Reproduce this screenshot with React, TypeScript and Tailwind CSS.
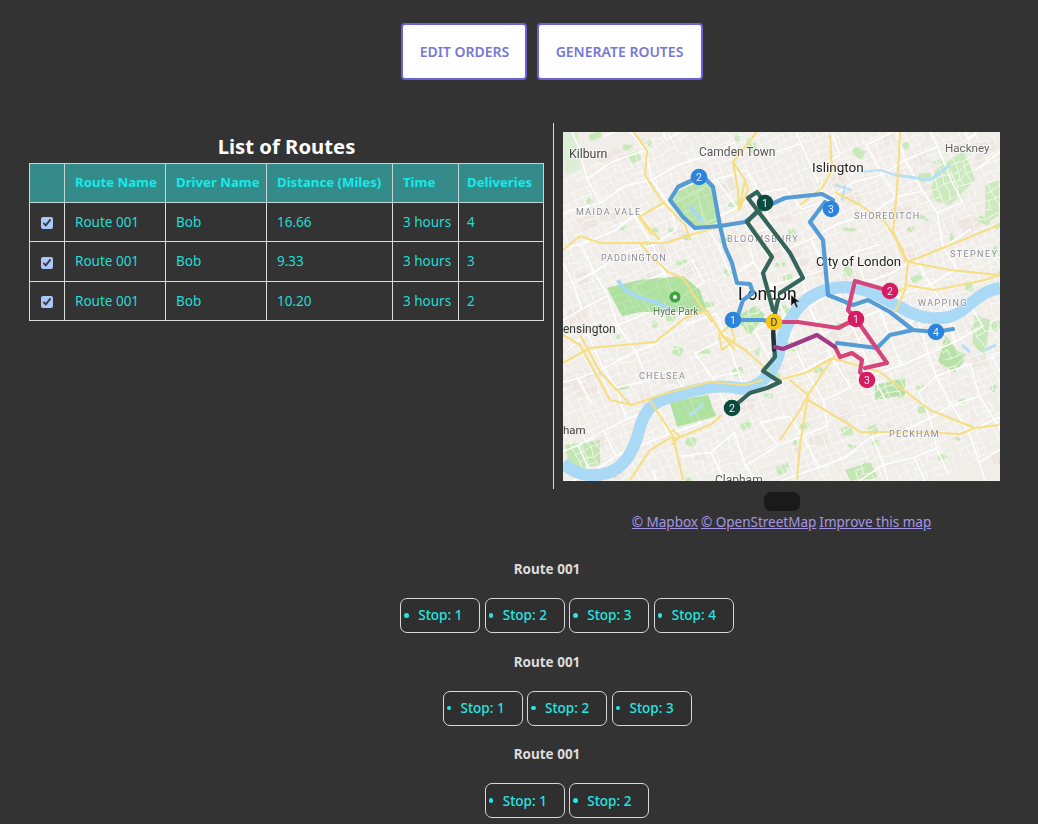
import React from "react";

const font = { fontFamily: '"Noto Sans", "Open Sans", sans-serif' };

function rng(seed: number) {
  let s = seed;
  return () => {
    s = (s * 1664525 + 1013904223) % 4294967296;
    return s / 4294967296;
  };
}

const X0 = 563, Y0 = 132, W = 437, H = 349;

function buildStreets(step: number, jitter: number, prob: number, seed: number) {
  const r = rng(seed);
  const cols = Math.ceil(W / step) + 2;
  const rows = Math.ceil(H / step) + 2;
  const pts: [number, number][][] = [];
  const angle = -0.42;
  for (let j = 0; j < rows + 8; j++) {
    const row: [number, number][] = [];
    for (let i = 0; i < cols + 8; i++) {
      const gx = (i - 4) * step - W / 2 + r() * jitter;
      const gy = (j - 4) * step - H / 2 + r() * jitter;
      row.push([
        X0 + W / 2 + gx * Math.cos(angle) - gy * Math.sin(angle),
        Y0 + H / 2 + gx * Math.sin(angle) + gy * Math.cos(angle),
      ]);
    }
    pts.push(row);
  }
  let d = "";
  const f = (n: number) => n.toFixed(1);
  for (let j = 0; j < pts.length; j++) {
    for (let i = 0; i < pts[j].length; i++) {
      const p = pts[j][i];
      if (i + 1 < pts[j].length && r() < prob) d += `M${f(p[0])} ${f(p[1])}L${f(pts[j][i + 1][0])} ${f(pts[j][i + 1][1])}`;
      if (j + 1 < pts.length && r() < prob) d += `M${f(p[0])} ${f(p[1])}L${f(pts[j + 1][i][0])} ${f(pts[j + 1][i][1])}`;
    }
  }
  return d;
}

function buildPatches(n: number, seed: number, a: number, b: number) {
  const r = rng(seed);
  const out: { x: number; y: number; w: number; h: number; a: number }[] = [];
  for (let i = 0; i < n; i++) {
    out.push({ x: X0 + r() * W, y: Y0 + r() * H, w: a + r() * b, h: a * 0.8 + r() * b * 0.7, a: r() * 60 - 30 });
  }
  return out;
}

const fine = buildStreets(8, 4, 0.8, 7);
const mid = buildStreets(30, 9, 0.62, 23);
const patches = buildPatches(90, 11, 4, 9);
const tints = buildPatches(70, 91, 7, 14);

const yellowRoads = [
  "M634 132L647 151L645 175L661 200L685 225L690 240",
  "M563 250L580 236L600 243L640 243L665 243L690 235L722 226",
  "M640 243L650 255L668 272L683 278L700 305L712 322",
  "M665 202L639 217L652 235",
  "M639 217L660 240",
  "M757 132L733 162L738 190L739 210M733 162L745 180L739 210L748 190L745 180",
  "M563 363L590 348L655 342L685 318L707 310",
  "M707 310L722 335L745 350L770 372",
  "M722 335L735 350M719 335L730 325L735 340L722 350Z",
  "M563 335L580 345L610 400L632 405L660 395L710 382L745 385L763 380",
  "M580 335L600 372L630 404",
  "M650 400L673 436L683 480",
  "M672 440L710 425L722 415",
  "M672 430L680 436L672 445",
  "M630 480L650 450L672 437",
  "M830 135L832 170L822 188L800 205",
  "M835 192L860 205L885 222L903 250L905 262",
  "M900 132L897 190L893 230L900 250L908 262L905 290L895 312",
  "M908 262L950 245L999 225",
  "M908 262L950 270L999 275",
  "M905 285L935 290L985 280L999 275",
  "M890 295L905 288",
  "M832 358L880 372L930 410L975 428L999 425",
  "M832 358L808 372L780 380",
  "M835 355L808 395L800 410L780 440",
  "M808 395L800 445L797 480",
  "M808 400L850 425L860 432L920 432L960 434L975 428",
  "M790 380L808 395",
];

function Marker({ x, y, c, t, tc = "#eef" }: { x: number; y: number; c: string; t: string; tc?: string }) {
  return (
    <g>
      <circle cx={x} cy={y} r="8.3" fill={c} />
      <text x={x} y={y + 3.7} textAnchor="middle" fontSize="10.5" fill={tc} fontFamily="Roboto, sans-serif">
        {t}
      </text>
    </g>
  );
}

function Label({ x, y, t, s = 11, c = "#444", sp = 0, w = 400 }: { x: number; y: number; t: string; s?: number; c?: string; sp?: number; w?: number }) {
  return (
    <text x={x} y={y} fontSize={s} fill={c} letterSpacing={sp} fontWeight={w} fontFamily="Roboto, sans-serif" stroke="#fff" strokeOpacity="0.55" strokeWidth="2" paintOrder="stroke">
      {t}
    </text>
  );
}

function MapDrawing() {
  return (
    <svg viewBox={`${X0} ${Y0} ${W} ${H}`} width={W} height={H} className="block">
      <defs>
        <filter id="soft" x="0" y="0" width="100%" height="100%">
          <feGaussianBlur stdDeviation="0.4" />
        </filter>
      </defs>
      <rect x={X0} y={Y0} width={W} height={H} fill="#f1eeea" />
      <g filter="url(#soft)">
        {tints.map((p, i) => (
          <rect key={i} x={p.x} y={p.y} width={p.w} height={p.h} fill="#eee6e1" transform={`rotate(${p.a} ${p.x} ${p.y})`} />
        ))}
        {patches.map((p, i) => (
          <rect key={i} x={p.x} y={p.y} width={p.w} height={p.h} rx="2" fill="#c8e9ba" transform={`rotate(${p.a} ${p.x} ${p.y})`} />
        ))}
        {/* parks */}
        <path d="M677 192L700 181L712 184L720 222L693 228L672 204Z" fill="#b8e2a8" />
        <path d="M607 288L640 280L683 276L700 290L707 312L640 312L622 316Z" fill="#aee0a0" />
        <path d="M670 402L708 395L716 416L677 427Z" fill="#aee0a0" />
        <path d="M735 318L755 305L765 315L750 335Z" fill="#bfe5ae" />
        <path d="M875 385L905 378L905 395L875 400Z" fill="#b8e2a8" />
        <path d="M945 335L965 360L955 372L938 362Z" fill="#b8e2a8" />
        <path d="M975 315L990 320L985 355L972 345Z" fill="#c6e7b7" />
        <path d="M935 170L965 150L975 180L950 205L930 200Z" fill="#cdeabf" />
        <path d="M985 185L999 180L999 215L985 225Z" fill="#cdeabf" />
        <path d="M565 445L600 440L600 465L570 470Z" fill="#c3e6b4" />
        <path d="M845 470L870 462L878 478L850 481Z" fill="#c3e6b4" />
        <path d="M563 132L578 132L580 170L565 175Z" fill="#dcefd6" />
        {/* streets */}
        <path d={fine} fill="none" stroke="#fdfcfb" strokeOpacity="0.85" strokeWidth="0.9" />
        <path d={mid} fill="none" stroke="#ffffff" strokeWidth="1.5" />
        <path d="M677 192L700 181L712 184L720 222L693 228L672 204Z" fill="#b8e2a8" fillOpacity="0.7" />
        <path d="M607 288L640 280L683 276L700 290L707 312L640 312L622 316Z" fill="#aee0a0" fillOpacity="0.75" />
        <path d="M670 402L708 395L716 416L677 427Z" fill="#aee0a0" fillOpacity="0.8" />
        {/* water */}
        <path d="M563 463C575 475 592 478 607 473C625 468 635 448 640 427C645 410 652 403 670 397C690 392 712 383 737 388C755 392 772 375 778 357C782 340 783 330 792 317C800 303 815 288 845 287C870 288 885 300 900 307C920 320 945 322 960 312C975 300 985 290 1000 288" fill="none" stroke="#aad9f6" strokeWidth="12" />
        <path d="M690 206C695 212 697 218 703 220M618 280C625 295 640 298 655 302M655 302L672 310" fill="none" stroke="#a7d8f2" strokeWidth="4" />
        <path d="M689 415C695 412 700 408 703 403M962 345L970 352M895 175L930 180L950 165M996 345L985 350" fill="none" stroke="#b6dff5" strokeWidth="3" />
        <path d="M835 185L852 190M845 185L842 200M860 172L880 170M880 170L895 175" fill="none" stroke="#b6dff5" strokeWidth="2" />
        {yellowRoads.map((d, i) => (
          <path key={i} d={d} fill="none" stroke="#f6de82" strokeWidth="2.1" strokeLinejoin="round" />
        ))}
      </g>
      {/* labels */}
      <Label x={569} y={158} t="Kilburn" s={12.3} c="#444" />
      <Label x={699} y={156} t="Camden Town" s={12} c="#555" />
      <Label x={812} y={172} t="Islington" s={13.5} c="#222" />
      <Label x={945} y={152} t="Hackney" s={11.6} c="#666" />
      <Label x={576} y={215} t="MAIDA VALE" s={9} c="#8a8a96" sp={1.4} />
      <Label x={727} y={242} t="BLOOMSBURY" s={9} c="#8a8a96" sp={1.4} />
      <Label x={854} y={219} t="SHOREDITCH" s={9} c="#8a8a96" sp={1.2} />
      <Label x={950} y={257} t="STEPNEY" s={9} c="#8a8a96" sp={1.4} />
      <Label x={601} y={261} t="PADDINGTON" s={9} c="#8a8a96" sp={1} />
      <Label x={816} y={266} t="City of London" s={13.2} c="#222" />
      <Label x={738} y={300} t="London" s={17.5} c="#111" />
      <Label x={918} y={306} t="WAPPING" s={9} c="#8a8a96" sp={1.4} />
      <Label x={653} y={315} t="Hyde Park" s={10} c="#5c7a55" />
      <text x={563} y={333} fontSize="12" fill="#333" fontFamily="Roboto, sans-serif">ensington</text>
      <Label x={639} y={379} t="CHELSEA" s={9} c="#8a8a96" sp={1.2} />
      <text x={563} y={434} fontSize="11.5" fill="#444" fontFamily="Roboto, sans-serif">ham</text>
      <Label x={889} y={437} t="PECKHAM" s={9} c="#8a8a96" sp={1.2} />
      <Label x={715} y={484} t="Clapham" s={12} c="#555" />
      <circle cx={675} cy={297} r="5.5" fill="#3ea33e" />
      <circle cx={675} cy={297} r="2" fill="#fff" />
      {/* routes */}
      <g fill="none" strokeLinejoin="round" strokeLinecap="round" strokeWidth="4.2">
        <g stroke="#559bd6">
          <path d="M699 177L678 187L670 200L683 217L695 228L720 226L713 187L703 176Z" />
          <path d="M720 226L725 247L732 263L737 283L750 284L753 293L743 300L738 315" />
          <path d="M720 226L745 222L765 207L785 198L822 194L833 200" />
          <path d="M825 202L810 222L823 240L828 295L853 305L868 300L890 312L913 330L936 332L953 329" />
          <path d="M913 330L890 335L877 348L837 343" />
          <path d="M733 320L763 320L771 322" />
        </g>
        <g stroke="#35645a">
          <path d="M765 203L757 192L748 198L790 253L803 278L780 293" />
          <path d="M765 203L747 222L772 257L763 273L773 310" />
          <path d="M778 300L773 322" />
          <path d="M773 333L775 357L763 371L780 382L767 388L750 393L732 408" />
        </g>
        <path d="M773 322L774 350" stroke="#22333a" />
        <g stroke="#d6457a">
          <path d="M890 291L855 281L848 310L856 319L838 328L798 322L775 322" />
          <path d="M856 319L887 363L865 368" />
          <path d="M835 347L840 357L852 353L862 360L860 372L867 380" />
        </g>
        <path d="M775 347L783 349L817 335L835 347" stroke="#a13a85" />
      </g>
      <Marker x={699} y={177} c="#2a84de" t="2" />
      <Marker x={733} y={320} c="#2a84de" t="1" />
      <Marker x={831} y={209} c="#2a84de" t="3" />
      <Marker x={936} y={332} c="#2a84de" t="4" />
      <Marker x={765} y={203} c="#0c4a3e" t="1" />
      <Marker x={732} y={408} c="#0c4a3e" t="2" />
      <Marker x={890} y={291} c="#d81b60" t="2" />
      <Marker x={856} y={319} c="#d81b60" t="1" />
      <Marker x={867} y={380} c="#d81b60" t="3" />
      <Marker x={774} y={322} c="#f5c518" t="D" tc="#333" />
      <path d="M791 295L791 306L794 303L796.5 308L798 307L796 302L800 302Z" fill="#111" stroke="#ddd" strokeWidth="0.5" />
    </svg>
  );
}

const rows = [
  { d: "16.66", n: 4 },
  { d: "9.33", n: 3 },
  { d: "10.20", n: 2 },
];

const th = "border border-[#c4d6d6] pl-[10px] pr-[8px] text-left font-bold text-[13.2px] whitespace-nowrap text-[#14eaea]";
const td = "border border-[#dcdcdc] pl-[10px] pr-[8px] text-[13.5px] whitespace-nowrap text-[#1fdcd6]";

function Stops({ n }: { n: number }) {
  return (
    <div className="flex flex-col items-center">
      <div className="text-[13.5px] font-bold text-[#dcdcdc] leading-[20px]">Route 001</div>
      <div className="pl-10 mt-[19px] flex gap-[4.5px]">
        {Array.from({ length: n }, (_, i) => (
          <div key={i} className="relative w-[80px] h-[35px] border border-[#d8d8d8] rounded-[7px] bg-[#2f2f2f] flex items-center pl-[17px] text-[13.5px] font-medium text-[#22e8e4]">
            <span className="absolute left-[3px] top-[14px] w-[4.5px] h-[4.5px] rounded-full bg-[#22e8e4]" />
            Stop: {i + 1}
          </div>
        ))}
      </div>
    </div>
  );
}

export default function App() {
  return (
    <div className="w-[1038px] h-[824px] overflow-hidden bg-[#333333]" style={font}>
      <div className="flex justify-center gap-[10px] pt-[23px] pl-[65px]">
        <button className="w-[126px] h-[57px] pl-[2px] bg-white border-2 border-[#6a63d8] rounded-[4px] text-[14px] font-semibold text-[#7577d6]">EDIT ORDERS</button>
        <button className="w-[166px] h-[57px] bg-white border-2 border-[#6a63d8] rounded-[4px] text-[14px] font-semibold text-[#7577d6]">GENERATE ROUTES</button>
      </div>

      <div className="flex mt-[43px] h-[366px]">
        <div className="w-[553px] pl-[29px] pr-[9px]">
          <h2 className="w-[515px] mt-[9px] h-[31px] text-center text-[20.3px] leading-[28px] font-bold text-white">List of Routes</h2>
          <table className="border-collapse table-fixed w-[514px]">
            <colgroup>
              <col className="w-[35px]" />
              <col className="w-[101px]" />
              <col className="w-[101px]" />
              <col className="w-[126px]" />
              <col className="w-[66px]" />
              <col className="w-[85px]" />
            </colgroup>
            <thead>
              <tr className="h-[39px] bg-[#358a8a]">
                <th className={th} />
                <th className={th}>Route Name</th>
                <th className={th}>Driver Name</th>
                <th className={th}>Distance (Miles)</th>
                <th className={th}>Time</th>
                <th className={th + " !pl-[8px]"}>Deliveries</th>
              </tr>
            </thead>
            <tbody>
              {rows.map((r, i) => (
                <tr key={i} className="h-[39.4px]">
                  <td className="border border-[#dcdcdc] text-center">
                    <input type="checkbox" checked readOnly className="w-[12px] h-[12px] accent-[#a8c7fa] align-[-1px]" />
                  </td>
                  <td className={td}>Route 001</td>
                  <td className={td}>Bob</td>
                  <td className={td}>{r.d}</td>
                  <td className={td}>3 hours</td>
                  <td className={td + " !pl-[8px]"}>{r.n}</td>
                </tr>
              ))}
            </tbody>
          </table>
        </div>
        <div className="border-l border-[#d8d8d8] pl-[9px] pt-[9px]">
          <MapDrawing />
        </div>
      </div>

      <div className="ml-[563px] w-[437px] flex flex-col items-center">
        <div className="mt-[3px] w-[36px] h-[19px] rounded-[7px] bg-[#1a1a1a]" />
        <div className="mt-[1px] text-[13.5px] leading-[20px] text-[#a596e6] flex gap-[3px]">
          <a className="underline">© Mapbox</a>
          <a className="underline">© OpenStreetMap</a>
          <a className="underline">Improve this map</a>
        </div>
      </div>

      <div className="ml-[56px] mt-[27px] flex flex-col gap-[18.6px]">
        <Stops n={4} />
        <Stops n={3} />
        <Stops n={2} />
      </div>
    </div>
  );
}
